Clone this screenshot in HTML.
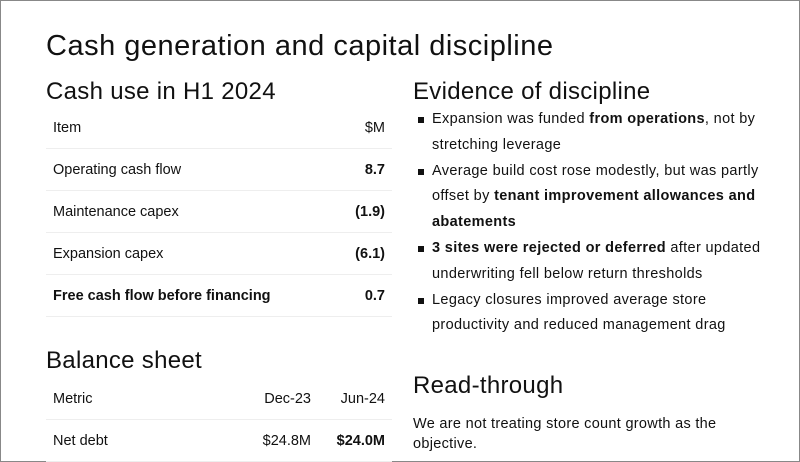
<!DOCTYPE html>
<html><head><style>
body{margin:0;width:800px;height:449px;overflow:hidden;background:#fff;font-family:"Liberation Sans",sans-serif;color:#111}
.frame{position:absolute;left:0;top:0;width:798px;height:460px;border:1px solid #888}
h1{position:absolute;left:46px;top:30px;margin:0;font-size:29px;font-weight:400;letter-spacing:0.5px}
h2{position:absolute;margin:0;font-size:24px;font-weight:400;letter-spacing:0.3px}
table{position:absolute;left:46px;width:346px;border-collapse:collapse;font-size:14.5px}
td{height:41px;padding:0 7px;border-bottom:1px solid #eee}
td.r{text-align:right}
b{font-weight:700}
ul{position:absolute;left:413px;top:107px;margin:0;padding:0;list-style:none;font-size:14.5px;letter-spacing:0.35px;line-height:25.8px;width:365px}
li{position:relative;padding-left:19px}
li:before{content:"";position:absolute;left:5px;top:10px;width:6px;height:6px;background:#111}
p{position:absolute;left:413px;top:414px;margin:0;font-size:14.5px;letter-spacing:0.3px;line-height:20px;width:340px}
</style></head><body>
<div class="frame"></div>
<h1>Cash generation and capital discipline</h1>
<h2 style="left:46px;top:78px">Cash use in H1 2024</h2>
<table style="top:107px">
<tr><td>Item</td><td class="r">$M</td></tr>
<tr><td>Operating cash flow</td><td class="r"><b>8.7</b></td></tr>
<tr><td>Maintenance capex</td><td class="r"><b>(1.9)</b></td></tr>
<tr><td>Expansion capex</td><td class="r"><b>(6.1)</b></td></tr>
<tr><td><b>Free cash flow before financing</b></td><td class="r"><b>0.7</b></td></tr>
</table>
<h2 style="left:46px;top:347px">Balance sheet</h2>
<table style="top:378px">
<tr><td>Metric</td><td class="r">Dec-23</td><td class="r" style="width:60px">Jun-24</td></tr>
<tr><td>Net debt</td><td class="r">$24.8M</td><td class="r"><b>$24.0M</b></td></tr>
</table>
<h2 style="left:413px;top:78px">Evidence of discipline</h2>
<ul>
<li>Expansion was funded <b>from operations</b>, not by stretching leverage</li>
<li>Average build cost rose modestly, but was partly offset by <b>tenant improvement allowances and abatements</b></li>
<li><b>3 sites were rejected or deferred</b> after updated underwriting fell below return thresholds</li>
<li>Legacy closures improved average store productivity and reduced management drag</li>
</ul>
<h2 style="left:413px;top:372px">Read-through</h2>
<p>We are not treating store count growth as the objective.</p>
</body></html>
